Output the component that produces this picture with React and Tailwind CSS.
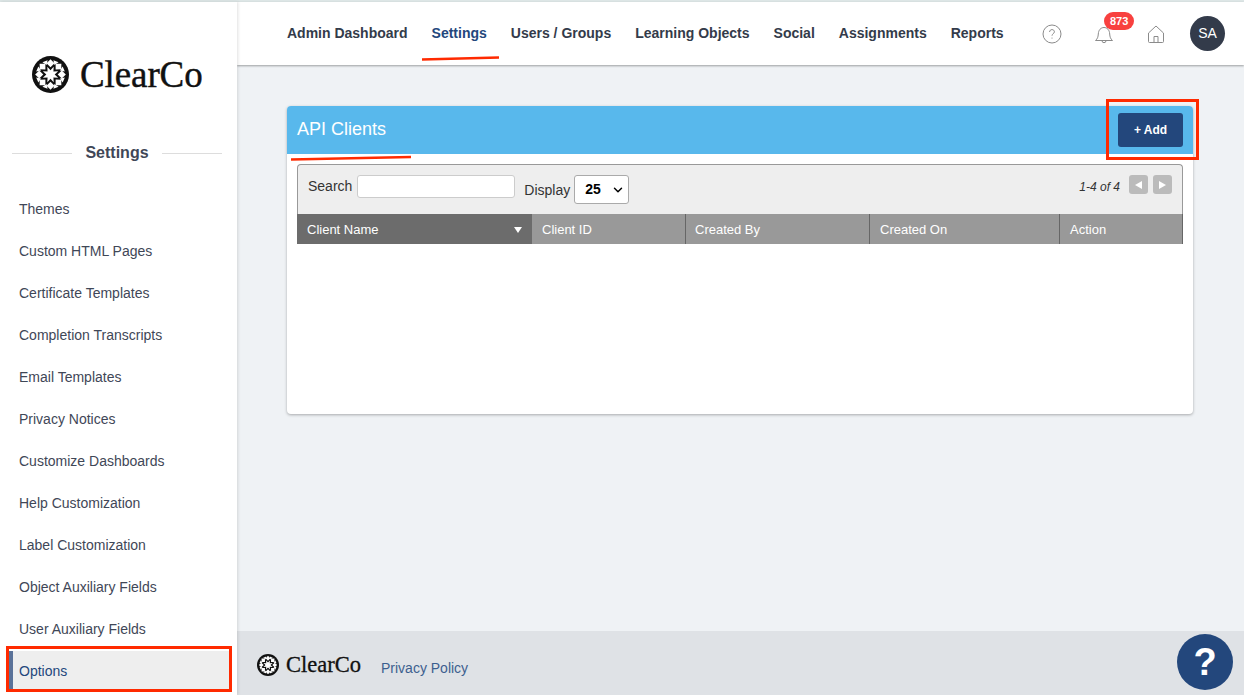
import React from "react";
import { ChevronDown } from "lucide-react";

const NAV = ["Admin Dashboard", "Settings", "Users / Groups", "Learning Objects", "Social", "Assignments", "Reports"];

const SIDE = [
  "Themes",
  "Custom HTML Pages",
  "Certificate Templates",
  "Completion Transcripts",
  "Email Templates",
  "Privacy Notices",
  "Customize Dashboards",
  "Help Customization",
  "Label Customization",
  "Object Auxiliary Fields",
  "User Auxiliary Fields",
];

const COLS = [
  { label: "Client ID", w: "w-[153px]", pad: "pl-[10px]" },
  { label: "Created By", w: "w-[184px]", pad: "pl-[9px] border-l border-[#666]" },
  { label: "Created On", w: "w-[190px]", pad: "pl-[10px] border-l border-[#666]" },
  { label: "Action", w: "flex-1", pad: "pl-[10px] border-l border-[#666]" },
];

const ANGLES = [0, 45, 90, 135, 180, 225, 270, 315];

// eight pointed star for the middle of the mark
const STAR = Array.from({ length: 16 }, (_, i) => {
  const r = i % 2 ? 9 : 4.5;
  const a = (i * 22.5 * Math.PI) / 180;
  return `${(20 + r * Math.sin(a)).toFixed(2)},${(20 - r * Math.cos(a)).toFixed(2)}`;
}).join(" ");

// rosette mark: dark disc, white star in the middle, ring of white cells
const Rosette = ({ className }) => (
  <svg viewBox="0 0 40 40" className={className}>
    <circle cx="20" cy="20" r="20" fill="#111" />
    {ANGLES.map((a) => (
      <g key={a}>
        <polygon transform={`rotate(${a} 20 20)`} fill="#fff" points="20,3.400 24.300,7.800 20,12.200 15.700,7.800" />
        <polygon transform={`rotate(${a + 22.5} 20 20)`} fill="#fff" points="17,4.500 23,4.500 20,9" />
      </g>
    ))}
    <polygon fill="#fff" points={STAR} />
  </svg>
);

const Logo = () => (
  <div className="flex items-center gap-[11px] text-[#111]">
    <Rosette className="w-[37px] h-[37px]" />
    <span className="text-[37px] leading-none tracking-[-0.1px] [-webkit-text-stroke:0.4px_#111] font-['Liberation_Serif',serif]">
      ClearCo
    </span>
  </div>
);

const Sidebar = () => (
  <aside className="w-[237px] shrink-0 bg-white shadow-[1px_0_3px_rgba(0,0,0,0.12)] z-10 flex flex-col">
    <div className="h-[54px]" />
    <div className="pl-[32px]">
      <Logo />
    </div>
    <div className="flex items-center mt-[48px] pl-[12px] pr-[15px]">
      <div className="flex-1 h-px bg-[#ddd]" />
      <span className="px-[13px] text-[16px] font-bold text-[#3f4757]">Settings</span>
      <div className="flex-1 h-px bg-[#ddd]" />
    </div>
    <ul className="mt-[23px] text-[14px] text-[#3f4757]">
      {SIDE.map((s) => (
        <li key={s} className="h-[42px] flex items-center pl-[19px]">
          {s}
        </li>
      ))}
      <li className="h-[40px] mt-[1px] ml-[9px] mr-[8px] flex items-center pl-[6px] bg-[#eee] border-l-4 border-[#5a7299] text-[#23477c]">
        Options
      </li>
    </ul>
  </aside>
);

const Header = () => (
  <header className="h-[63px] shrink-0 bg-white shadow-[0_1px_2px_rgba(0,0,0,0.35)] z-[5] flex items-center pl-[50px] pr-[19px]">
    <nav className="flex gap-[24px] text-[14px] font-bold text-[#333b4a]">
      {NAV.map((n) => (
        <a key={n} className={n === "Settings" ? "text-[#23477c]" : ""}>
          {n}
        </a>
      ))}
    </nav>
    <div className="ml-auto flex items-center text-[#8b8b8b]">
      <svg viewBox="0 0 20 20" fill="none" stroke="currentColor" strokeWidth="1" className="w-[20px] h-[20px]">
        <circle cx="10" cy="10" r="9" />
        <path d="M7.600 8c0-1.500 1.100-2.400 2.400-2.400s2.400.9 2.400 2.200c0 1.900-2.400 1.900-2.400 3.900" />
        <path d="M10 13.600v1" />
      </svg>
      <div className="relative ml-[32px]">
        <svg viewBox="0 0 20 20" fill="none" stroke="currentColor" strokeWidth="1" className="w-[20px] h-[20px] mt-[2px]">
          <path d="M1.500 15.500c2-1.800 2.600-3.400 2.800-6.500C4.500 5 6.800 2.500 10 2.500S15.500 5 15.700 9c.2 3.100.8 4.700 2.800 6.500z" />
          <path d="M8 15.700a2 2 0 0 0 4 0" />
        </svg>
        <span className="absolute -top-[11px] left-[10px] h-[18px] px-[6px] rounded-full bg-[#f8413f] text-white text-[11px] font-bold leading-[18px]">
          873
        </span>
      </div>
      <svg viewBox="0 0 20 20" fill="none" stroke="currentColor" strokeWidth="1" className="w-[20px] h-[20px] ml-[32px]">
        <path d="M2.500 9 10 2l7.500 7v8.500a1 1 0 0 1-1 1h-13a1 1 0 0 1-1-1z" />
        <path d="M8 18.500v-6h4v6" />
      </svg>
      <div className="ml-[24px] w-[35px] h-[35px] rounded-full bg-[#333b4a] text-white text-[14px] flex items-center justify-center">
        SA
      </div>
    </div>
  </header>
);

const Card = () => (
  <div className="w-[906px] h-[308px] bg-white rounded-[4px] shadow-[0_1px_3px_rgba(0,0,0,0.3)]">
    <div className="h-[48px] bg-[#58b8ec] rounded-t-[4px] flex items-center justify-between pl-[10px] pr-[10px]">
      <h2 className="text-[18px] text-white -mt-[2px]">API Clients</h2>
      <button className="w-[65px] h-[34px] bg-[#23477c] rounded-[3px] text-white text-[12px] font-bold">+ Add</button>
    </div>
    <div className="mx-[10px] mt-[10px]">
      <div className="h-[50px] bg-[#eee] rounded-t-[4px] border-t border-x border-[#999] flex items-start text-[14px] text-[#333]">
        <span className="ml-[10px] mt-[11px]">Search</span>
        <input className="ml-[5px] mt-[10px] w-[158px] h-[23px] bg-white border border-[#ccc] rounded-[3px]" />
        <span className="ml-[9px] mt-[15px]">Display</span>
        <div className="ml-[4px] mt-[10px] w-[55px] h-[29px] bg-white border border-[#aaa] rounded-[3px] flex items-center justify-between pl-[10px] pr-[3px] font-bold text-black">
          25
          <ChevronDown size={14} strokeWidth={2.5} />
        </div>
        <span className="ml-auto mt-[13px] text-[12px] italic">1-4 of 4</span>
        <button className="ml-[9px] mt-[10px] w-[19px] h-[19px] bg-[#bbb] rounded-[3px] flex items-center justify-center">
          <span className="border-y-[4px] border-y-transparent border-r-[7px] border-r-white" />
        </button>
        <button className="ml-[5px] mr-[10px] mt-[10px] w-[19px] h-[19px] bg-[#bbb] rounded-[3px] flex items-center justify-center">
          <span className="border-y-[4px] border-y-transparent border-l-[7px] border-l-white" />
        </button>
      </div>
      <div className="h-[30px] flex bg-[#999] text-[13px] font-medium text-white border-r border-[#666]">
        <div className="w-[235px] bg-[#6c6c6c] flex items-center justify-between pl-[10px] pr-[10px]">
          <span className="mt-[1px]">Client Name</span>
          <span className="border-x-[4px] border-x-transparent border-t-[6px] border-t-white mt-[2px]" />
        </div>
        {COLS.map((c) => (
          <div key={c.label} className={`${c.w} ${c.pad} flex items-center`}>
            <span className="mt-[1px]">{c.label}</span>
          </div>
        ))}
      </div>
    </div>
  </div>
);

const Footer = () => (
  <footer className="h-[64px] shrink-0 bg-[#dfe2e6] flex items-center pl-[20px] pt-[4px]">
    <div className="flex items-center gap-[7px] text-[#111]">
      <Rosette className="w-[22px] h-[22px]" />
      <span className="text-[22.500px] leading-none [-webkit-text-stroke:0.3px_#111] font-['Liberation_Serif',serif]">
        ClearCo
      </span>
    </div>
    <a className="ml-[20px] mt-[6px] text-[14px] text-[#3d5f8f]">Privacy Policy</a>
  </footer>
);

export default function App() {
  return (
    <div className="relative w-[1244px] h-[695px] overflow-hidden bg-[#eff2f5] font-['Liberation_Sans',Arial,sans-serif]">
      <div className="h-[2px] bg-[#dde6e6]" />
      <div className="flex h-[693px]">
        <Sidebar />
        <div className="flex-1 flex flex-col min-w-0">
          <Header />
          <main className="flex-1 pl-[50px] pt-[41px]">
            <Card />
          </main>
          <Footer />
        </div>
      </div>

      {/* help bubble */}
      <button className="absolute z-20 left-[1177px] top-[634px] w-[56px] h-[56px] rounded-full bg-[#23477c] text-white text-[38px] font-bold leading-none flex items-center justify-center">
        ?
      </button>

      {/* red review marks */}
      <div className="absolute z-20 left-[1106px] top-[99px] w-[93px] h-[61px] border-[3px] border-[#ff2a00]" />
      <div className="absolute z-20 left-[6px] top-[646px] w-[226px] h-[46px] border-[3px] border-[#ff2a00]" />
      <svg className="absolute z-20 left-0 top-0 w-[1244px] h-[695px] pointer-events-none" fill="none" stroke="#ff2a00" strokeWidth="2.500">
        <path d="M422 59.500 499 57.500" />
        <path d="M291 159.500 411 157" />
      </svg>
    </div>
  );
}
